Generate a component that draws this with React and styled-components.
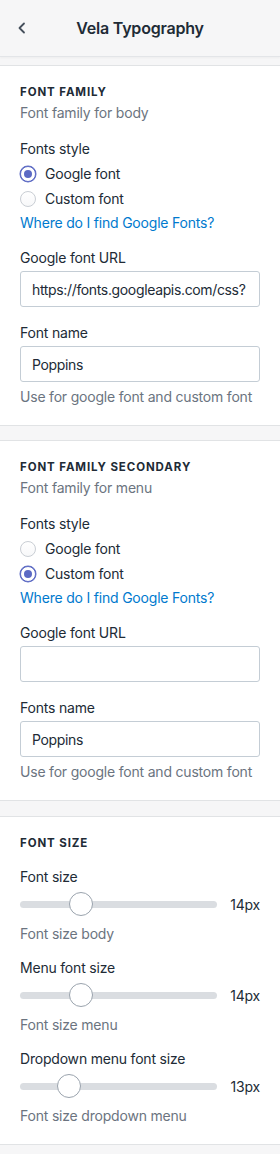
import React from "react";
import styled, { createGlobalStyle } from "styled-components";

const GlobalStyle = createGlobalStyle`
  * { box-sizing: border-box; }
  body {
    margin: 0;
    background: #f6f6f7;
    font-family: Inter, "Noto Sans", sans-serif;
    color: #212b36;
    letter-spacing: -0.2px;
    -webkit-font-smoothing: antialiased;
  }
`;

const SPage = styled.div`
  width: 280px;
  min-height: 1154px;
  background: #f6f6f7;
  padding-bottom: 10px;
`;

const SHeader = styled.div`
  position: relative;
  height: 57px;
  display: flex;
  align-items: center;
  justify-content: center;
  background: #f6f6f7;
  border-bottom: 1px solid #e3e5e8;
  box-shadow: 0 1px 2px rgba(0, 0, 0, 0.04);
`;

const SBack = styled.button`
  position: absolute;
  left: 12px;
  top: 18px;
  width: 20px;
  height: 20px;
  padding: 0;
  border: 0;
  background: none;
  display: flex;
  align-items: center;
  justify-content: center;
  color: #454f5b;
`;

const STitle = styled.h1`
  margin: 0;
  font-size: 16px;
  font-weight: 600;
  color: #212b36;
  letter-spacing: -0.2px;
`;

const SCard = styled.section`
  margin-top: ${(p) => p.$gap}px;
  background: #fff;
  border-top: 1px solid #e1e3e5;
  border-bottom: 1px solid #e1e3e5;
  padding: 16px 20px 18px;
`;

const SHeading = styled.h2`
  margin: 0;
  font-size: 11.5px;
  line-height: 20px;
  font-weight: 700;
  letter-spacing: 0.9px;
  text-transform: uppercase;
  color: #212b36;
`;

const SSub = styled.p`
  margin: 1px 0 0;
  font-size: 14px;
  line-height: 20px;
  color: #6b7480;
`;

const SLabel = styled.div`
  margin-top: ${(p) => p.$gap ?? 16}px;
  font-size: 14px;
  line-height: 20px;
  color: #212b36;
`;

const SRadioGroup = styled.div`
  margin-top: 2px;
  display: flex;
  flex-direction: column;
`;

const SRadioRow = styled.label`
  height: 25px;
  display: flex;
  align-items: center;
  gap: 9px;
  font-size: 14px;
  color: #212b36;
`;

const SRadio = styled.span`
  width: 16px;
  height: 16px;
  border-radius: 50%;
  border: 1px solid ${(p) => (p.$checked ? "#5c6ac4" : "#c9ced4")};
  background: ${(p) =>
    p.$checked ? "#fff" : "linear-gradient(180deg, #fff, #f7f8f9)"};
  display: flex;
  align-items: center;
  justify-content: center;
  box-shadow: ${(p) => (p.$checked ? "0 0 0 0.5px #5c6ac4" : "none")};

  &::after {
    content: "";
    width: 8px;
    height: 8px;
    border-radius: 50%;
    background: #5c6ac4;
    display: ${(p) => (p.$checked ? "block" : "none")};
  }
`;

const SLink = styled.a`
  display: block;
  margin-top: 2px;
  font-size: 14px;
  line-height: 20px;
  color: #007ace;
  text-decoration: none;
`;

const SInput = styled.input`
  display: block;
  width: 100%;
  height: 36px;
  margin-top: 3px;
  padding: 0 8px 0 11px;
  border: 1px solid #c4cdd5;
  border-radius: 3px;
  font-family: inherit;
  font-size: 14px;
  letter-spacing: -0.35px;
  color: #212b36;
  background: #fff;
  outline: none;
`;

const SHelp = styled.p`
  margin: ${(p) => p.$gap ?? 5}px 0 0;
  font-size: 14px;
  line-height: 20px;
  color: #6b7480;
`;

const SSliderRow = styled.div`
  margin-top: 5px;
  height: 24px;
  display: flex;
  align-items: center;
  justify-content: space-between;
`;

const STrack = styled.div`
  position: relative;
  width: 197px;
  height: 7px;
  border-radius: 4px;
  background: #dadde1;
`;

const SThumb = styled.span`
  position: absolute;
  top: 50%;
  width: 24px;
  height: 24px;
  margin: -12px 0 0 -12px;
  border-radius: 50%;
  background: #fff;
  border: 1px solid #9aa3ad;
`;

const SValue = styled.span`
  font-size: 14px;
  color: #212b36;
`;

const Radio = ({ label, checked }) => (
  <SRadioRow>
    <SRadio $checked={checked} />
    {label}
  </SRadioRow>
);

const Slider = ({ value, min = 10, max = 24 }) => {
  // thumb center travels across track minus thumb width
  const left = 12 + ((value - min) / (max - min)) * 173;
  return (
    <SSliderRow>
      <STrack>
        <SThumb style={{ left: `${left}px` }} />
      </STrack>
      <SValue>{value}px</SValue>
    </SSliderRow>
  );
};

const FontFamilyCard = ({ title, sub, google, url, nameLabel, gap }) => (
  <SCard $gap={gap}>
    <SHeading>{title}</SHeading>
    <SSub>{sub}</SSub>
    <SLabel>Fonts style</SLabel>
    <SRadioGroup>
      <Radio label="Google font" checked={google} />
      <Radio label="Custom font" checked={!google} />
    </SRadioGroup>
    <SLink href="#">Where do I find Google Fonts?</SLink>
    <SLabel $gap={15}>Google font URL</SLabel>
    <SInput readOnly value={url} />
    <SLabel>{nameLabel}</SLabel>
    <SInput readOnly value="Poppins" />
    <SHelp>Use for google font and custom font</SHelp>
  </SCard>
);

const sizes = [
  { label: "Font size", value: 14, help: "Font size body" },
  { label: "Menu font size", value: 14, help: "Font size menu" },
  { label: "Dropdown menu font size", value: 13, help: "Font size dropdown menu" },
];

const App = () => (
  <>
    <GlobalStyle />
    <SPage>
      <SHeader>
        <SBack aria-label="Back">
          <svg width="12" height="12" viewBox="0 0 12 12" fill="none">
            <path d="M8 1.5L3.5 6L8 10.5" stroke="currentColor" strokeWidth="1.8" strokeLinecap="round" strokeLinejoin="round" />
          </svg>
        </SBack>
        <STitle>Vela Typography</STitle>
      </SHeader>

      <FontFamilyCard
        gap={8}
        title="Font family"
        sub="Font family for body"
        google
        url="https://fonts.googleapis.com/css?"
        nameLabel="Font name"
      />
      <FontFamilyCard
        gap={14}
        title="Font family secondary"
        sub="Font family for menu"
        google={false}
        url=""
        nameLabel="Fonts name"
      />

      <SCard $gap={15}>
        <SHeading>Font size</SHeading>
        {sizes.map((s) => (
          <React.Fragment key={s.label}>
            <SLabel $gap={14}>{s.label}</SLabel>
            <Slider value={s.value} />
            <SHelp $gap={8}>{s.help}</SHelp>
          </React.Fragment>
        ))}
      </SCard>
    </SPage>
  </>
);

export default App;
